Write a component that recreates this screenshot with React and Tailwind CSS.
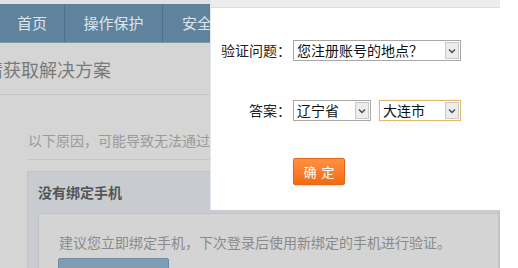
function Chevron() {
    return (
        <svg width="8" height="6" viewBox="0 0 8 6" className="text-[#4a4a4a]">
            <path d="M1 1.5 L4 4.5 L7 1.5" fill="none" stroke="currentColor" strokeWidth="1.4" />
        </svg>
    );
}

function FakeSelect({ value, width, focused }) {
    return (
        <div
            className={`flex items-center h-[21px] bg-white border ${focused ? "border-[#e3b868] shadow-[0_0_1px_#f0d090]" : "border-[#a8a8a8]"} ${width}`}
        >
            <span className="flex-1 pl-[3px] text-[14px] leading-[19px] text-[#111] whitespace-nowrap">{value}</span>
            <span className="flex items-center justify-center w-[14px] h-[17px] mr-[1px] bg-[#ececec] border border-[#c8c8c8]">
                <Chevron />
            </span>
        </div>
    );
}

export default function App() {
    const font = { fontFamily: '"Noto Sans CJK SC", "Noto Sans", sans-serif' };

    return (
        <div className="relative w-[518px] h-[268px] overflow-hidden bg-white" style={font}>
            {/* page behind the overlay */}
            <div className="w-[500px] h-full bg-[#d5d5d5] overflow-hidden">
                <div className="h-[4px] bg-[#e1e1e1]" />
                <div className="flex h-[39px] bg-[#5f839d] border-b border-[#7e9bb0] text-[15px] text-[#dce5ec]">
                    <div className="w-[65px] flex items-center justify-center border-r border-[#4f7088]">首页</div>
                    <div className="w-[98px] flex items-center justify-center border-r border-[#4f7088]">操作保护</div>
                    <div className="pl-[19px] flex items-center">安全中心</div>
                </div>

                <div className="h-[52px] flex items-center border-b border-[#c6c6c6]">
                    <span className="-ml-[15px] pt-[1px] text-[18px] text-[#7a7a7a] whitespace-nowrap">请获取解决方案</span>
                </div>

                <div className="ml-[28px]">
                    <div className="h-[65px] flex items-center pt-[26px] border-b border-[#c6c6c6] text-[14px] text-[#9a9a9a] whitespace-nowrap">
                        以下原因，可能导致无法通过安全验证
                    </div>

                    <div className="mt-[11px] -ml-[1px] bg-[#c8ccd0] border border-[#bfc4c9] pl-[10px] h-[120px]">
                        <div className="h-[41px] flex items-center text-[14px] font-bold text-[#555]">没有绑定手机</div>
                        <div className="bg-[#d4d4d4] border border-[#c4c4c4] pl-[20px] h-[80px]">
                            <div className="h-[44px] flex items-center pt-[12px] text-[14px] text-[#8a8a8a] whitespace-nowrap">
                                建议您立即绑定手机，下次登录后使用新绑定的手机进行验证。
                            </div>
                            <div className="-ml-[1px] w-[111px] h-[24px] bg-[#7f9db5] border border-[#6d8ca4] rounded-[2px]" />
                        </div>
                    </div>
                </div>
            </div>

            {/* dialog over the page */}
            <div className="absolute left-[210px] top-0 w-[290px] h-[210px] bg-white border-l border-[#dfe6ec]">
                <div className="h-[8px] bg-[#ececec] border-b border-[#dcdcdc]" />

                <div className="mt-[32px] flex items-center">
                    <span className="w-[82px] text-right pr-[2px] text-[14px] text-[#222] whitespace-nowrap">验证问题：</span>
                    <FakeSelect value="您注册账号的地点？" width="w-[168px]" />
                </div>

                <div className="mt-[39px] flex items-center">
                    <span className="w-[82px] text-right pr-[2px] text-[14px] text-[#222] whitespace-nowrap">答案：</span>
                    <FakeSelect value="辽宁省" width="w-[78px]" />
                    <div className="ml-[8px]">
                        <FakeSelect value="大连市" width="w-[82px]" focused />
                    </div>
                </div>

                <div className="mt-[37px] pl-[82px]">
                    <button className="w-[52px] h-[27px] bg-gradient-to-b from-[#ff9140] to-[#f26a10] border border-[#e0681c] rounded-[2px] text-[13px] text-white tracking-[5px] pl-[5px] shadow-[0_1px_2px_rgba(0,0,0,0.15)]">
                        确定
                    </button>
                </div>
            </div>
        </div>
    );
}
